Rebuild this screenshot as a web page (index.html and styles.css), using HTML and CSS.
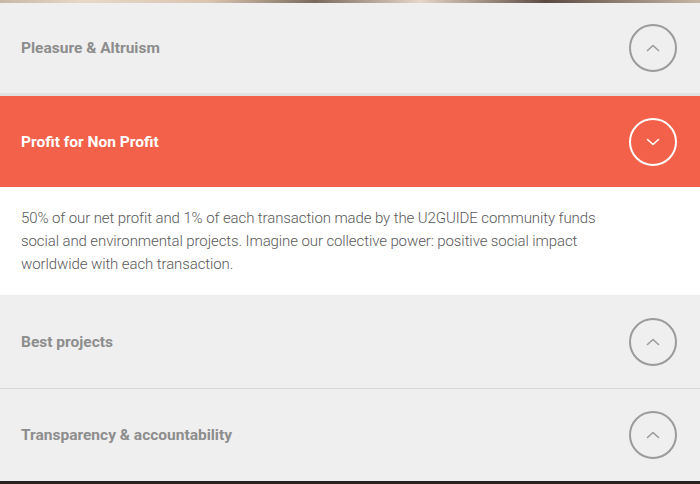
FILE: index.html
```html
<!DOCTYPE html>
<html>

<head>
	<meta charset='utf-8'>
	<title>Values</title>
	<link rel="stylesheet" href="styles.css">
</head>

<body>
	<div class="accordion">
		<div class="item">
			<div class="item_head">
				<span class="item_title">Pleasure &amp; Altruism</span>
				<span class="toggle"><svg viewBox="0 0 48 48"><circle cx="24" cy="24" r="23"/><path d="M18.5 26.5 L24 21.5 L29.5 26.5"/></svg></span>
			</div>
		</div>
		<div class="item item_open">
			<div class="item_head">
				<span class="item_title">Profit for Non Profit</span>
				<span class="toggle"><svg viewBox="0 0 48 48"><circle cx="24" cy="24" r="23"/><path d="M18.5 21.5 L24 26.5 L29.5 21.5"/></svg></span>
			</div>
			<div class="item_body">
				<p>50% of our net profit and 1% of each transaction made by the U2GUIDE community funds social and environmental projects. Imagine our collective power: positive social impact worldwide with each transaction.</p>
			</div>
		</div>
		<div class="item item_tall">
			<div class="item_head">
				<span class="item_title">Best projects</span>
				<span class="toggle"><svg viewBox="0 0 48 48"><circle cx="24" cy="24" r="23"/><path d="M18.5 26.5 L24 21.5 L29.5 26.5"/></svg></span>
			</div>
		</div>
		<div class="item item_tall">
			<div class="item_head">
				<span class="item_title">Transparency &amp; accountability</span>
				<span class="toggle"><svg viewBox="0 0 48 48"><circle cx="24" cy="24" r="23"/><path d="M18.5 26.5 L24 21.5 L29.5 26.5"/></svg></span>
			</div>
		</div>
	</div>
</body>

</html>
```

FILE: styles.css
```css
body {
	margin: 0;
	background: linear-gradient(90deg, #c9b8a8 0%, #e8d8c8 12%, #d9c4b0 30%, #7a6a5c 45%, #e6d6c8 60%, #5a4a40 78%, #c8b6a6 100%);
	font-family: Roboto, "Liberation Sans", sans-serif;
}
.accordion {
	padding: 3px 0;
	background: linear-gradient(180deg, transparent 0, transparent 481px, #2a211c 481px);
}
.item {
	background: #efefef;
	border-bottom: 1px solid #d6d6d6;
}
.item:first-child {
	border-bottom: 3px solid #e2e2e2;
}
.item:last-child {
	border-bottom: none;
}
.item_head {
	height: 90px;
	display: flex;
	align-items: center;
	justify-content: space-between;
	padding: 0 23px 0 21px;
}
.item_tall .item_head {
	height: 92px;
}
.item_title {
	font-size: 15.5px;
	font-weight: 700;
	color: #8d8d8d;
}
.toggle svg {
	display: block;
	width: 48px;
	height: 48px;
	fill: none;
	stroke: #9b9b9b;
	stroke-width: 2;
}
.toggle path {
	stroke-width: 1.6;
	stroke-linecap: round;
	stroke-linejoin: round;
}
.item_open {
	border-bottom: none;
}
.item_open .item_head {
	height: 91px;
	background: #f3614a;
}
.item_open .item_title {
	color: #fff;
}
.item_open .toggle svg {
	stroke: #fff;
}
.item_body {
	background: #fff;
	padding: 20px 21px 19px;
	border-bottom: 1px solid #ececec;
}
.item_body p {
	margin: 0;
	max-width: 600px;
	font-size: 15px;
	font-weight: 300;
	line-height: 23px;
	color: #595959;
	letter-spacing: -0.1px;
}
```
